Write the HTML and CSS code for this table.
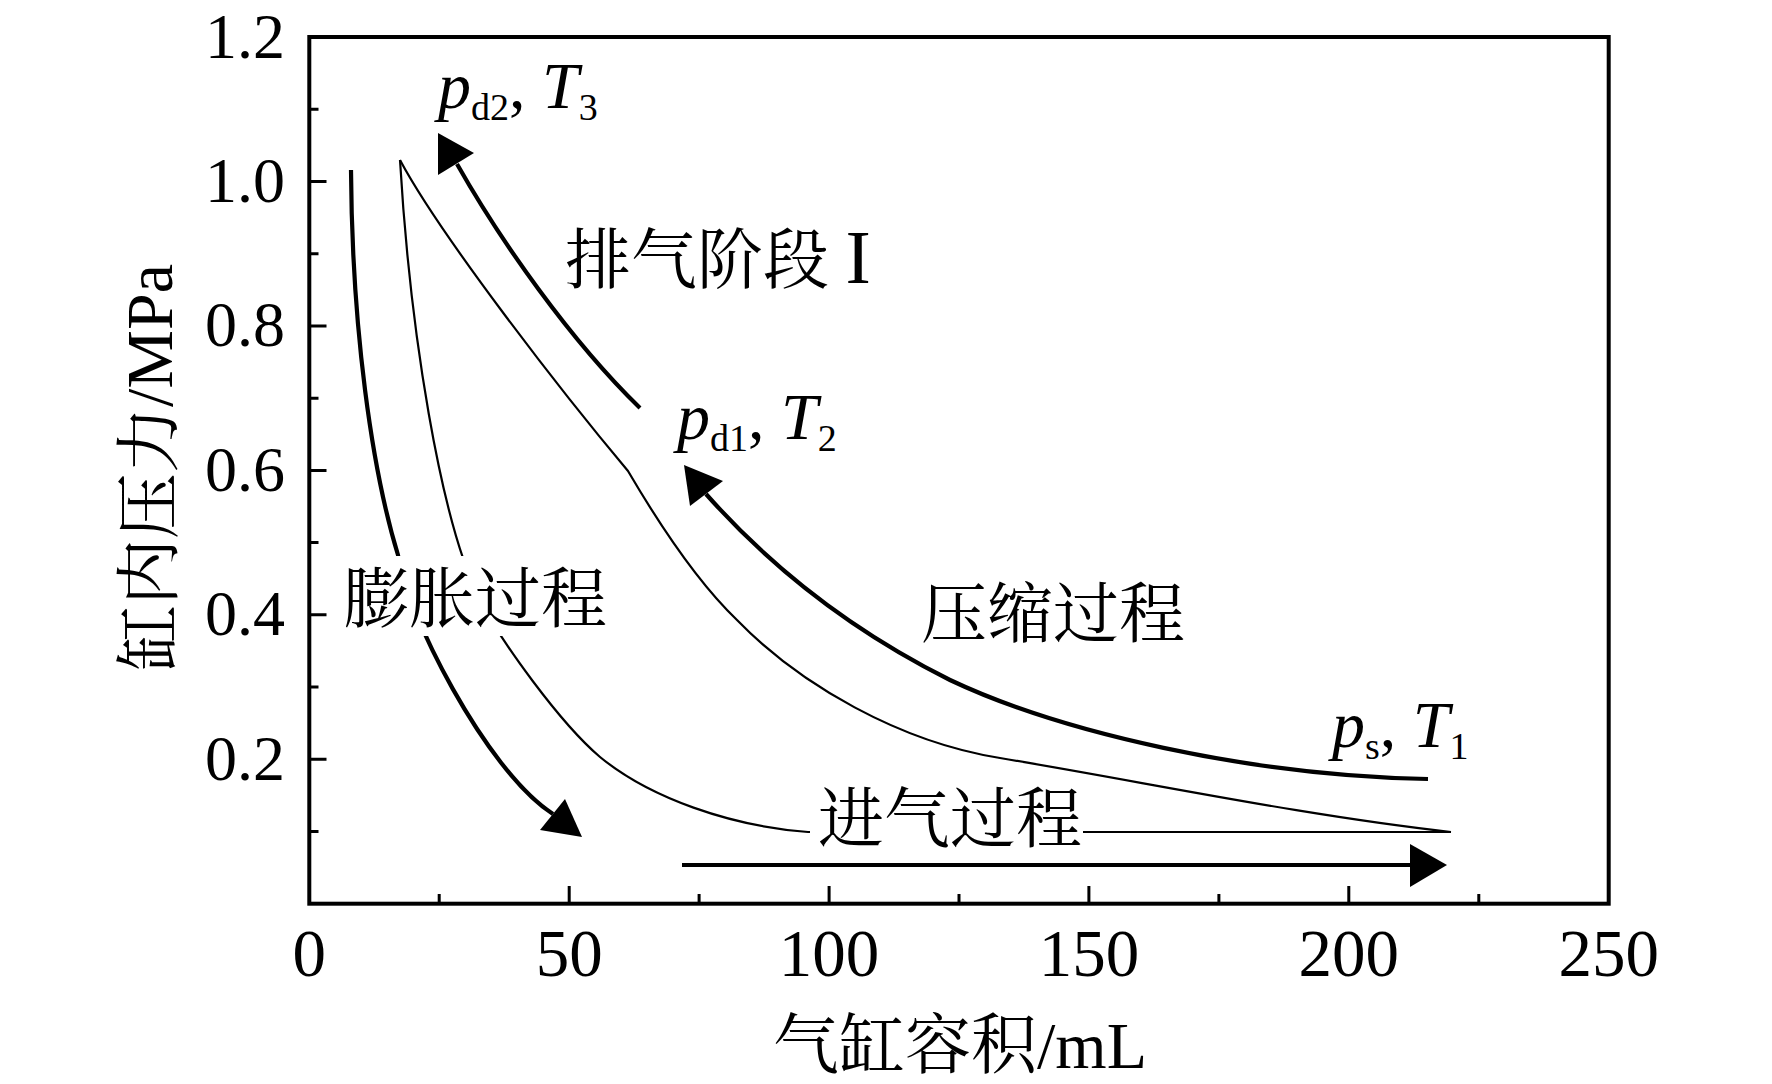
FILE: index.html
```html
<!DOCTYPE html>
<html lang="zh-CN">
<head>
<meta charset="utf-8">
<title>气缸容积与缸内压力</title>
<link rel="stylesheet" href="styles.css">
</head>
<body>
<main class="figure">
  <div class="y-title"><span class="y-title-text">缸内压力/MPa</span></div>
  <svg class="plot" width="1582" height="990" viewBox="190 0 1582 990" xmlns="http://www.w3.org/2000/svg">
    <!-- ticks -->
    <g class="ticks">
      <path d="M309.3,831.5H318.5 M309.3,759.3H326.5 M309.3,687H318.5 M309.3,614.8H326.5 M309.3,542.6H318.5 M309.3,470.4H326.5 M309.3,398.2H318.5 M309.3,325.9H326.5 M309.3,253.7H318.5 M309.3,181.5H326.5 M309.3,109.3H318.5"/>
      <path d="M439.2,903.7V894 M569.2,903.7V886 M699.1,903.7V894 M829.1,903.7V886 M959,903.7V894 M1088.9,903.7V886 M1218.9,903.7V894 M1348.8,903.7V886 M1478.8,903.7V894"/>
    </g>
    <rect class="frame" x="309.3" y="37" width="1299.4" height="866.7"/>

    <!-- tick labels -->
    <g class="ylabels">
      <text x="285" y="57.5">1.2</text>
      <text x="285" y="202">1.0</text>
      <text x="285" y="346.4">0.8</text>
      <text x="285" y="490.9">0.6</text>
      <text x="285" y="635.3">0.4</text>
      <text x="285" y="779.8">0.2</text>
    </g>
    <g class="xlabels">
      <text x="309.3" y="976">0</text>
      <text x="569.2" y="976">50</text>
      <text x="829.1" y="976">100</text>
      <text x="1088.9" y="976">150</text>
      <text x="1348.8" y="976">200</text>
      <text x="1608.7" y="976">250</text>
    </g>

    <!-- thin process curves -->
    <path class="thin" d="M400,160 C410,330 440,520 480,600 C500,640 560,723 600,757 C650,798 730,826 808,832 L1451,832"/>
    <path class="thin" d="M400,160 C440,235 560,390 628,471 C645,500 690,575 737,620 C800,685 900,742 1000,758 C1150,783 1300,815 1451,832"/>

    <!-- thick arrow curves -->
    <path class="thick" d="M351,170 C352,330 372,470 398,555 C405,610 485,770 553,814"/>
    <polygon class="head" points="540,830 565,799 582,837"/>

    <path class="thick" d="M457,164 C500,240 570,340 640,408"/>
    <polygon class="head" points="438,133 474,153 438,175"/>

    <path class="thick" d="M706,494 C760,555 840,625 950,680 C1060,732 1250,776 1428,779"/>
    <polygon class="head" points="684,465 723,481 690,506"/>

    <path class="thick" d="M682,865 H1412"/>
    <polygon class="head" points="1410,844 1447,865 1410,887"/>

    <!-- label backgrounds -->
    <rect class="mask" x="338" y="556" width="280" height="80"/>
    <rect class="mask" x="810" y="818" width="273" height="28"/>

    <!-- annotations -->
    <text class="note" x="565" y="283">排气阶段 <tspan class="roman">I</tspan></text>
    <text class="note" x="921" y="637">压缩过程</text>
    <text class="note" x="343" y="622">膨胀过程</text>
    <text class="note" x="818" y="842">进气过程</text>

    <text class="sym" x="438" y="108"><tspan class="it">p</tspan><tspan class="sub" dy="12">d2</tspan><tspan dy="-12">, </tspan><tspan class="it">T</tspan><tspan class="sub" dy="12">3</tspan></text>
    <text class="sym" x="677" y="439"><tspan class="it">p</tspan><tspan class="sub" dy="12">d1</tspan><tspan dy="-12">, </tspan><tspan class="it">T</tspan><tspan class="sub" dy="12">2</tspan></text>
    <text class="sym" x="1332" y="747"><tspan class="it">p</tspan><tspan class="sub" dy="12">s</tspan><tspan dy="-12">, </tspan><tspan class="it">T</tspan><tspan class="sub" dy="12">1</tspan></text>
  </svg>
  <div class="x-title">气缸容积/mL</div>
</main>
</body>
</html>
```

FILE: styles.css
```css
html, body {
  margin: 0;
  padding: 0;
  background: #ffffff;
}

body {
  width: 1772px;
  height: 1084px;
  overflow: hidden;
  font-family: "Liberation Serif", "Noto Serif CJK SC", "Noto Sans CJK SC", serif;
  color: #000000;
}

.figure {
  display: grid;
  grid-template-columns: 190px 1582px;
  grid-template-rows: 990px 94px;
  width: 1772px;
  height: 1084px;
}

.y-title {
  grid-column: 1;
  grid-row: 1;
  display: flex;
  align-items: center;
  justify-content: center;
  padding-left: 110px;
  padding-bottom: 54px;
}

.y-title-text {
  writing-mode: vertical-rl;
  text-orientation: sideways;
  transform: rotate(180deg);
  font-size: 66px;
  line-height: 66px;
  white-space: nowrap;
}

.plot {
  grid-column: 2;
  grid-row: 1;
  display: block;
}

.x-title {
  grid-column: 1 / -1;
  grid-row: 2;
  padding-top: 23px;
  padding-left: 148px;
  font-size: 66px;
  line-height: 66px;
  text-align: center;
  white-space: nowrap;
}

.frame {
  fill: none;
  stroke: #000000;
  stroke-width: 4;
}

.ticks path {
  fill: none;
  stroke: #000000;
  stroke-width: 3;
}

.ylabels text {
  font-family: "Liberation Serif", serif;
  font-size: 64px;
  text-anchor: end;
  fill: #000000;
}

.xlabels text {
  font-family: "Liberation Serif", serif;
  font-size: 67px;
  text-anchor: middle;
  fill: #000000;
}

.thin {
  fill: none;
  stroke: #000000;
  stroke-width: 2.2;
  stroke-linejoin: round;
}

.thick {
  fill: none;
  stroke: #000000;
  stroke-width: 4.2;
  stroke-linejoin: round;
}

.head {
  fill: #000000;
  stroke: none;
}

.mask {
  fill: #ffffff;
  stroke: none;
}

.note {
  font-family: "Liberation Serif", "Noto Serif CJK SC", "Noto Sans CJK SC", serif;
  font-size: 66px;
  fill: #000000;
  white-space: pre;
}

.note .roman {
  font-size: 76px;
}

.sym {
  font-family: "Liberation Serif", serif;
  font-size: 66px;
  fill: #000000;
  white-space: pre;
}

.sym .it {
  font-style: italic;
}

.sym .sub {
  font-size: 38px;
}
```
